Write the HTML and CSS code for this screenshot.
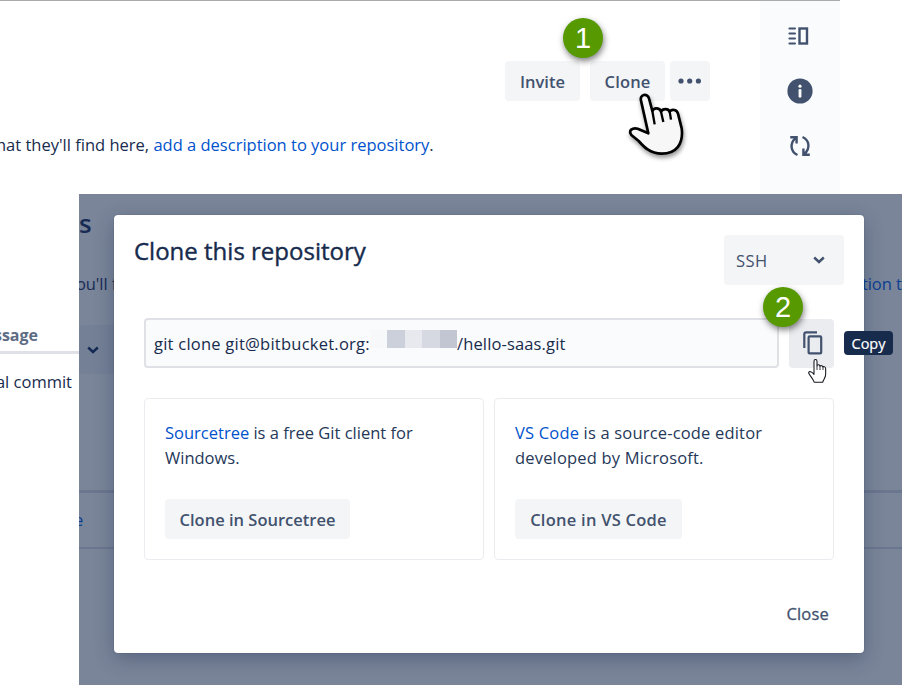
FILE: index.html
```
<!DOCTYPE html>
<html lang="en">
<head>
<meta charset="utf-8">
<title>Clone this repository</title>
<link rel="stylesheet" href="styles.css">
</head>
<body>
<div class="page">
  <header class="repo">
    <div class="repo-main">
      <div class="actions">
        <button class="btn invite"><span>Invite</span></button>
        <button class="btn clone"><span>Clone</span></button>
        <button class="btn more"><svg width="24" height="6" viewBox="0 0 24 6"><circle cx="3" cy="3" r="2.6"/><circle cx="11.7" cy="3" r="2.6"/><circle cx="20.4" cy="3" r="2.6"/></svg></button>
      </div>
      <p class="description"><span class="hint">hat they'll find here,</span> <a>add a description to your repository</a>.</p>
    </div>
    <nav class="rail">
      <svg class="panel-icon" width="24" height="24" viewBox="0 0 24 24" fill="none" stroke="#42526e" stroke-width="2"><path d="M2.400 4.500h5.600M2.400 9.500h5.600M2.400 14.500h5.600M2.400 19.500h5.600" stroke-linecap="round"/><rect x="12.500" y="4.500" width="7.500" height="15" stroke-width="2.400"/></svg>
      <svg width="26" height="26" viewBox="0 0 26 26"><circle cx="13" cy="13" r="12.6" fill="#42526e"/><circle cx="13" cy="8.2" r="1.6" fill="#fff"/><rect x="11.6" y="11" width="2.8" height="8.6" rx="1.2" fill="#fff"/></svg>
      <svg width="24" height="24" viewBox="0 0 24 24" fill="none" stroke="#42526e" stroke-width="2.4"><path d="M9.5 21C2.5 18 1.5 9.5 7.6 4.2M2.2 3.2h6.4v6.4"/><path d="M14.5 3C21.500 6 22.500 14.500 16.400 19.800M21.800 20.800h-6.400v-6.400"/></svg>
    </nav>
  </header>
  <div class="lower">
    <section class="commits">
      <div class="commits-head">ssage</div>
      <div class="commits-row">al commit</div>
    </section>
    <section class="screen">
      <div class="backdrop">
        <h1 class="bd-title">s</h1>
        <div class="bd-desc"><span>ou'll f</span><span class="bd-link">tion t</span></div>
        <div class="bd-branch"><svg width="14" height="10" viewBox="0 0 14 10"><path d="M2.200 2.500l4.800 4.500 4.800-4.500" fill="none" stroke="#142a55" stroke-width="2.400"/></svg></div>
        <div class="bd-row">e</div>
      </div>
      <div class="dialog">
        <div class="dialog-head">
          <h2><span>Clone this repository</span></h2>
          <div class="select"><span>SSH</span><svg width="14" height="10" viewBox="0 0 14 10"><path d="M2.200 2.500l4.800 4.500 4.800-4.500" fill="none" stroke="#42526e" stroke-width="2.400"/></svg></div>
        </div>
        <div class="command">
          <div class="field"><span class="cmd">git clone git@bitbucket.org:</span><span class="mosaic"><i></i><i></i><i></i><i></i><i></i></span><span class="path">/hello-saas.git</span></div>
          <button class="copy"><svg width="20" height="24" viewBox="0 0 20 24" fill="none" stroke="#42526e" stroke-width="2.200"><path d="M1.300 17V3.200q0-1.900 1.900-1.900H14"/><rect x="5.600" y="5.400" width="12.600" height="17" rx="1"/></svg></button>
        </div>
        <div class="clients">
          <article class="client"><p><a>Sourcetree</a><span> is a free Git client for</span><br>Windows.</p><button class="btn tree"><span>Clone in Sourcetree</span></button></article>
          <article class="client wide"><p><a>VS Code</a><span> is a source-code editor</span><br>developed by Microsoft.</p><button class="btn code"><span>Clone in VS Code</span></button></article>
        </div>
        <footer class="dialog-foot"><span>Close</span></footer>
      </div>
      <div class="tooltip">Copy</div>
    </section>
  </div>
  <div class="badge one">1</div>
  <div class="badge two">2</div>
  <svg class="hand-large" width="70" height="78" viewBox="405 270 210 234"><path d="M475 400L453 302C448 283 472 278 477 295L487 333C492 321 510 323 513 335C518 325 535 325 539 335C546 326 561 329 564 341L575 385C581 432 559 461 515 461C480 461 461 440 446 423L425 406C413 391 428 382 443 386Z" fill="#f7f7f7" stroke="#000" stroke-width="8" stroke-linejoin="round"/><path d="M487 333L494 373M513 335L520 366M539 335L543 359" fill="none" stroke="#000" stroke-width="7"/></svg>
  <svg class="hand-small" width="20" height="26" viewBox="291 414 60 78"><path d="M312 424C312 417 321 417 321 424V438C322 433 329 433 330 439C332 435 338 437 339 441C342 438 347 441 347 446V463C347 474 340 478 338 487H313C309 475 299 467 296 459C296 452 306 454 312 463Z" fill="#fff" stroke="#14171f" stroke-width="3.200" stroke-linejoin="round"/><path d="M321 438V450M330 439V450M339 441V450" stroke="#14171f" stroke-width="2.500"/></svg>
</div>
</body>
</html>
```
FILE: styles.css
```
* { box-sizing: border-box; }
body { margin: 0; background: #fff; font-family: "Open Sans", "Noto Sans", sans-serif; font-size: 16.5px; color: #172b4d; }
svg { display: block; flex: none; }
h1, h2, p { margin: 0; }
a { color: #0052cc; }
.page { position: relative; width: 902px; height: 685px; overflow: hidden; }

.repo { display: flex; width: 840px; height: 194px; border-top: 1px solid #aaa; }
.repo-main { width: 760px; padding-top: 60px; overflow: hidden; }
.actions { display: flex; padding-left: 505px; }
.btn { display: flex; align-items: center; justify-content: center; height: 40px; padding: 0; border: 0; border-radius: 4px; background: #f4f5f7; color: #42526e; font: 600 16.5px "Open Sans", sans-serif; white-space: nowrap; }
.btn.invite { width: 75px; margin-right: 10px; }
.btn.clone { width: 75px; margin-right: 5px; letter-spacing: .15px; }
.more { width: 40px; fill: #42526e; }
.description { margin: 31px 0 0 -4px; line-height: 25px; white-space: nowrap; }
.rail { display: flex; flex-direction: column; align-items: center; width: 80px; padding-top: 23px; gap: 30px; background: #fafbfc; }
.panel-icon { margin-right: 3px; }

.lower { display: flex; height: 491px; }
.commits { width: 79px; overflow: hidden; white-space: nowrap; }
.commits-head { display: flex; justify-content: flex-end; height: 160px; padding: 129px 41px 0 0; border-bottom: 3px solid #dfe1e6; color: #5e6c84; font-weight: 700; font-size: 16px; line-height: 25px; }
.commits-row { display: flex; justify-content: flex-end; padding: 15px 7px 0 0; line-height: 25px; }

.screen { position: relative; width: 823px; background: #7a8599; }
.backdrop { height: 491px; overflow: hidden; color: #172b54; }
.bd-title { height: 76px; padding-top: 11px; font-size: 26px; font-weight: 600; line-height: 36px; }
.bd-desc { display: flex; justify-content: space-between; height: 55px; margin-left: -3px; line-height: 27px; white-space: nowrap; letter-spacing: -.1px; }
.bd-link { width: 40px; color: #0b3f92; }
.bd-branch { display: flex; align-items: center; width: 60px; height: 49px; padding-left: 7px; border-radius: 4px; background: #748096; }
.bd-row { height: 59px; margin-top: 116px; border-top: 3px solid #6b778e; border-bottom: 2px solid #6b778e; text-indent: -5px; color: #0b3f92; line-height: 54px; }

.dialog { position: absolute; left: 35px; top: 21px; width: 750px; height: 438px; padding: 20px 20px 0; border-radius: 4px; background: #fff; box-shadow: 0 0 1px rgba(9,30,66,.5), 0 6px 20px rgba(9,30,66,.3); }
.dialog-head { display: flex; justify-content: space-between; }
.dialog-head h2 { font-size: 24px; font-weight: 400; line-height: 32px; -webkit-text-stroke: .4px #172b4d; white-space: nowrap; }
.select { display: flex; align-items: center; justify-content: space-between; width: 120px; height: 50px; padding: 0 18px 0 12px; border-radius: 4px; background: #f4f5f7; color: #42526e; letter-spacing: .4px; }
.command { display: flex; gap: 10px; margin: 33px 10px 0; }
.field { display: flex; align-items: center; width: 635px; height: 50px; padding-left: 8px; border: 2px solid #dfe1e6; border-radius: 4px; background: #fafbfc; white-space: nowrap; }
.cmd { width: 216px; letter-spacing: .24px; }
.path { letter-spacing: .14px; }
.mosaic { display: flex; width: 87px; height: 18px; margin-bottom: 8px; }
.mosaic i { flex: 1; background: #f7f8fa; }
.mosaic i:nth-child(2) { background: #ccd0db; }
.mosaic i:nth-child(3) { background: #e7e9ee; }
.mosaic i:nth-child(4) { background: #d6d9e1; }
.mosaic i:nth-child(5) { background: #c1c6d2; }
.copy { display: flex; align-items: center; justify-content: center; width: 45px; height: 49px; margin-top: 1px; padding: 0 0 1px 2px; border: 0; border-radius: 4px; background: #ebecf0; }
.clients { display: flex; gap: 10px; margin: 30px 10px 0; }
.client { width: 340px; height: 162px; padding: 21px 20px 0; border: 1px solid #ebecf0; border-radius: 4px; white-space: nowrap; }
.client p { line-height: 25px; color: #253858; }
.client.wide p { letter-spacing: .18px; }
.client .btn { margin-top: 29px; }
.btn.tree { width: 185px; }
.btn.code { width: 167px; letter-spacing: .25px; }
.dialog-foot { display: flex; justify-content: flex-end; margin: 41px 15px 0 0; line-height: 25px; color: #42526e; letter-spacing: .2px; -webkit-text-stroke: .3px #42526e; }
.tooltip { position: absolute; left: 765px; top: 137px; width: 49px; height: 24px; border-radius: 4px; background: #172b4d; color: #fff; font-size: 14.500px; line-height: 25px; text-align: center; -webkit-text-stroke: .2px #fff; }

.badge { position: absolute; width: 40px; height: 40px; border-radius: 50%; background: #569900; color: #fff; font: 29px/40px "Liberation Sans", sans-serif; text-align: center; box-shadow: 1px 3px 6px rgba(0,0,0,.5); }
.one { left: 563px; top: 18px; }
.two { left: 763px; top: 287px; }
.hand-large { position: absolute; left: 625px; top: 90px; filter: drop-shadow(1px 3px 2px rgba(0,0,0,.4)); }
.hand-small { position: absolute; left: 807px; top: 358px; }
```
